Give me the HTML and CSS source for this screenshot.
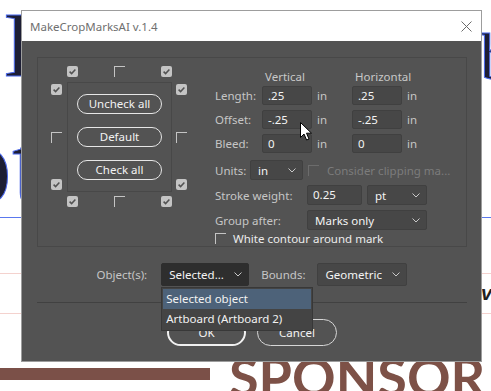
FILE: index.html
```html
<!DOCTYPE html>
<html lang="en">
<head>
  <meta charset="UTF-8" />
  <title>MakeCropMarksAI v.1.4</title>
  <link rel="stylesheet" href="styles.css">
</head>
<body>

<div class="canvas">
  <!-- artboard behind the dialog -->
  <span class="art art-cap">I</span>
  <span class="art art-ot">ot</span>
  <span class="art art-b">b</span>
  <div class="art-rule"></div>
  <div class="art-pink art-pink-top"></div>
  <div class="art-pink art-pink-bottom"></div>
  <span class="art-vi">vi</span>
  <div class="art-bar"></div>
  <span class="art-sponsor">SPONSOR</span>

  <div class="dialog">
    <div class="titlebar">
      <span class="title">MakeCropMarksAI v.1.4</span>
      <svg class="close" width="11" height="11" viewBox="0 0 11 11">
        <path d="M0.5 0.5 L10.5 10.5 M10.5 0.5 L0.5 10.5" stroke="#6b6b6b" stroke-width="1" fill="none"/>
      </svg>
    </div>

    <div class="dialog-body">
      <div class="panel">

        <!-- crop mark positions -->
        <div class="marks">
          <div class="marks-top">
            <span class="cb on"><svg viewBox="0 0 11 11"><path d="M2.6 5.6 L4.6 7.6 L8.4 3.6"/></svg></span>
            <span class="cb off"></span>
            <span class="cb on"><svg viewBox="0 0 11 11"><path d="M2.6 5.6 L4.6 7.6 L8.4 3.6"/></svg></span>
          </div>
          <div class="marks-left">
            <span class="cb on"><svg viewBox="0 0 11 11"><path d="M2.6 5.6 L4.6 7.6 L8.4 3.6"/></svg></span>
            <span class="cb off"></span>
            <span class="cb on"><svg viewBox="0 0 11 11"><path d="M2.6 5.6 L4.6 7.6 L8.4 3.6"/></svg></span>
          </div>
          <div class="marks-frame">
            <button class="pill">Uncheck all</button>
            <button class="pill">Default</button>
            <button class="pill">Check all</button>
          </div>
          <div class="marks-right">
            <span class="cb on"><svg viewBox="0 0 11 11"><path d="M2.6 5.6 L4.6 7.6 L8.4 3.6"/></svg></span>
            <span class="cb off"></span>
            <span class="cb on"><svg viewBox="0 0 11 11"><path d="M2.6 5.6 L4.6 7.6 L8.4 3.6"/></svg></span>
          </div>
          <div class="marks-bottom">
            <span class="cb on"><svg viewBox="0 0 11 11"><path d="M2.6 5.6 L4.6 7.6 L8.4 3.6"/></svg></span>
            <span class="cb off"></span>
            <span class="cb on"><svg viewBox="0 0 11 11"><path d="M2.6 5.6 L4.6 7.6 L8.4 3.6"/></svg></span>
          </div>
        </div>

        <!-- sizes -->
        <div class="settings">
          <div class="dims dims-head">
            <span></span>
            <span class="head">Vertical</span>
            <span></span>
            <span class="head">Horizontal</span>
          </div>
          <div class="dims">
            <span class="lbl">Length:</span>
            <span class="field">.25</span>
            <span class="unit">in</span>
            <span class="field">.25</span>
            <span class="unit">in</span>

            <span class="lbl">Offset:</span>
            <span class="field">-.25</span>
            <span class="unit">in</span>
            <span class="field">-.25</span>
            <span class="unit">in</span>

            <span class="lbl">Bleed:</span>
            <span class="field">0</span>
            <span class="unit">in</span>
            <span class="field">0</span>
            <span class="unit">in</span>
          </div>

          <div class="row row-units">
            <span class="lbl lbl-units">Units:</span>
            <span class="drop drop-units">in
              <svg class="chev" viewBox="0 0 8 5"><polyline points="0.5,0.5 4,4 7.5,0.5"/></svg>
            </span>
            <span class="cb off disabled"></span>
            <span class="muted">Consider clipping ma...</span>
          </div>

          <div class="row">
            <span class="lbl lbl-wide">Stroke weight:</span>
            <span class="field field-stroke">0.25</span>
            <span class="drop drop-pt">pt
              <svg class="chev" viewBox="0 0 8 5"><polyline points="0.5,0.5 4,4 7.5,0.5"/></svg>
            </span>
          </div>

          <div class="row">
            <span class="lbl lbl-wide">Group after:</span>
            <span class="drop drop-group">Marks only
              <svg class="chev" viewBox="0 0 8 5"><polyline points="0.5,0.5 4,4 7.5,0.5"/></svg>
            </span>
          </div>

          <div class="row row-contour">
            <span class="cb off"></span>
            <span class="check-text">White contour around mark</span>
          </div>
        </div>
      </div>

      <div class="target-row">
        <span class="lbl">Object(s):</span>
        <div class="drop-wrap">
          <span class="drop drop-object">Selected...
            <svg class="chev" viewBox="0 0 8 5"><polyline points="0.5,0.5 4,4 7.5,0.5"/></svg>
          </span>
          <div class="menu">
            <div class="menu-item active">Selected object</div>
            <div class="menu-item">Artboard (Artboard 2)</div>
          </div>
        </div>
        <span class="lbl lbl-bounds">Bounds:</span>
        <span class="drop drop-bounds">Geometric
          <svg class="chev" viewBox="0 0 8 5"><polyline points="0.5,0.5 4,4 7.5,0.5"/></svg>
        </span>
      </div>

      <div class="separator"></div>

      <div class="actions">
        <button class="action ok">OK</button>
        <button class="action">Cancel</button>
      </div>
    </div>
  </div>

  <svg class="cursor" width="13" height="20" viewBox="0 0 13 20">
    <path d="M0.5 0.5 L0.5 15.5 L4 12 L6.6 18 L9 17 L6.5 11.2 L11.5 11.2 Z" fill="#fff" stroke="#000" stroke-width="1"/>
  </svg>
</div>

</body>
</html>
```

FILE: styles.css
```css
* { box-sizing: border-box; }

body {
  margin: 0;
  background: #fff;
  font-family: "Noto Sans", "Open Sans", sans-serif;
}

.canvas {
  position: relative;
  width: 491px; height: 391px;
  overflow: hidden;
  background: #fff;
}

/* artboard */
.art {
  position: absolute;
  font-family: "Liberation Serif", serif;
  line-height: 1;
  color: #1d1e34;
  -webkit-text-stroke: 1px #4a68ec;
}
.art-cap { left: 3px; top: -3px; font-size: 94px; }
.art-ot { left: -47px; top: 106px; font-size: 118px; }
.art-b { left: 480px; top: 24px; font-size: 66px; }
.art-rule {
  position: absolute; left: 0; right: 0; top: 217px;
  height: 1px; background: #5a78ee;
}
.art-pink {
  position: absolute; left: 0; right: 0;
  height: 1px; background: #f4d2ce;
}
.art-pink-top { top: 273px; }
.art-pink-bottom { top: 313px; }
.art-vi {
  position: absolute; left: 481px; top: 283px;
  font-family: "Liberation Sans", sans-serif;
  font-size: 20px; font-weight: bold; font-style: italic;
  line-height: 1; color: #231f20;
}
.art-bar {
  position: absolute; left: 0; top: 368px;
  width: 210px; height: 12px; background: #7b5048;
}
.art-sponsor {
  position: absolute; left: 229px; top: 350px;
  font-family: Lato, sans-serif;
  font-size: 54px; font-weight: bold; letter-spacing: 0;
  line-height: 1; color: #7d5147;
}

/* dialog */
.dialog {
  position: absolute; left: 21px; top: 10px;
  width: 461px; height: 352px;
  border: 1px solid #9d9d9d;
  background: #535353;
  display: flex; flex-direction: column;
  font-size: 11.5px;
}
.titlebar {
  height: 30px; flex: none;
  background: #fff;
  display: flex; align-items: center; justify-content: space-between;
  padding: 0 9px 0 8px;
}
.title { color: #6f6f6f; font-size: 11.5px; }
.close { display: block; }

.dialog-body {
  flex: 1;
  padding: 16px 14px 0 15px;
  display: flex; flex-direction: column;
}

.panel {
  height: 190px;
  border: 1px solid #484848;
  display: flex;
  padding: 8px 0 0 13px;
}

/* checkboxes */
.cb {
  width: 11px; height: 11px; flex: none;
  display: block;
}
.cb.on { background: #c4c4c4; border-radius: 2px; }
.cb.on svg { display: block; width: 11px; height: 11px; }
.cb.on path { fill: none; stroke: #525252; stroke-width: 1.5; }
.cb.off { border-top: 1px solid #c4c4c4; border-left: 1px solid #c4c4c4; }
.cb.off.disabled { border-color: #6c6c6c; }

.marks {
  display: grid;
  grid-template-columns: 16px 105px 15px;
  grid-template-rows: 16px 110px 15px;
  width: 136px; flex: none;
}
.marks-top, .marks-bottom {
  grid-column: 2;
  display: flex; justify-content: space-between;
}
.marks-top { grid-row: 1; align-items: flex-start; }
.marks-bottom { grid-row: 3; align-items: flex-end; }
.marks-left, .marks-right {
  grid-row: 2;
  display: flex; flex-direction: column; justify-content: space-between;
  padding: 2px 0;
}
.marks-left { grid-column: 1; align-items: flex-start; }
.marks-right { grid-column: 3; align-items: flex-end; }
.marks-frame {
  grid-column: 2; grid-row: 2;
  border: 1px solid #484848;
  display: flex; flex-direction: column; align-items: center;
  padding-top: 11px; gap: 13px;
}
.pill {
  width: 85px; height: 20px;
  border: 1px solid #e6e6e6; border-radius: 10px;
  background: transparent; color: #f2f2f2;
  font: inherit; line-height: 16px; padding: 0;
}

/* settings column */
.settings {
  margin-left: 28px; padding-top: 3px;
  color: #c6c6c6;
}
.dims {
  display: grid;
  grid-template-columns: 47px 50px 40px 50px auto;
  grid-auto-rows: 19px;
  row-gap: 5px;
  margin-top: 1px;
}
.dims-head { grid-auto-rows: 16px; margin-top: 0; }
.head { padding-left: 3px; white-space: nowrap; line-height: 16px; color: #c8c8c8; }
.lbl { line-height: 19px; white-space: nowrap; color: #c6c6c6; }
.unit { padding-left: 5px; line-height: 19px; }

.field {
  height: 19px;
  background: #474747; border: 1px solid #404040; border-radius: 2px;
  color: #f4f4f4; padding-left: 5px; line-height: 17px;
}

.row { display: flex; align-items: center; height: 20px; margin-top: 5px; }
.row-units { margin-top: 7px; }
.lbl-units { width: 35px; }
.lbl-wide { width: 92px; }

.drop {
  height: 20px;
  background: #474747; border: 1px solid #404040; border-radius: 2px;
  color: #f4f4f4;
  display: flex; align-items: center; justify-content: space-between;
  padding: 0 6px 0 7px;
  white-space: nowrap;
}
.chev { width: 8px; height: 5px; display: block; }
.chev polyline { fill: none; stroke: #c8c8c8; stroke-width: 1; }

.drop-units { width: 53px; }
.row-units .cb { margin-left: 5px; }
.muted { margin-left: 8px; color: #7c7c7c; white-space: nowrap; }

.field-stroke { width: 55px; height: 20px; line-height: 18px; }
.drop-pt { width: 60px; margin-left: 5px; }
.drop-group { width: 120px; }

.row-contour { margin-top: 2px; height: 12px; }
.check-text { margin-left: 7px; color: #ececec; white-space: nowrap; }

/* target row */
.target-row {
  margin-top: 16px; height: 23px;
  display: flex; align-items: center; justify-content: center;
}
.drop-wrap { position: relative; margin-left: 14px; }
.drop-object { width: 88px; height: 23px; background: #2e2e2e; border-color: #2e2e2e; }
.lbl-bounds { margin-left: 12px; }
.drop-bounds { width: 90px; height: 23px; margin-left: 12px; }

.menu {
  position: absolute; left: 0; top: 24px;
  width: 152px;
  background: #444; border: 1px solid #383838;
  padding: 1px;
  color: #f2f2f2;
  z-index: 2;
}
.menu-item { height: 20px; line-height: 20px; padding-left: 3px; white-space: nowrap; }
.menu-item.active { background: #4d6279; }

.separator { margin-top: 16px; height: 1px; background: #414141; }

.actions {
  margin-top: 16px;
  display: flex; justify-content: center; gap: 11px;
}
.action {
  width: 80px; height: 27px;
  border: 1px solid #d6d6d6; border-radius: 14px;
  background: transparent; color: #f2f2f2;
  font: inherit; padding: 0;
}
.action.ok { width: 79px; border: 2px solid #f0f0f0; }

.cursor { position: absolute; left: 300px; top: 122px; }
```
